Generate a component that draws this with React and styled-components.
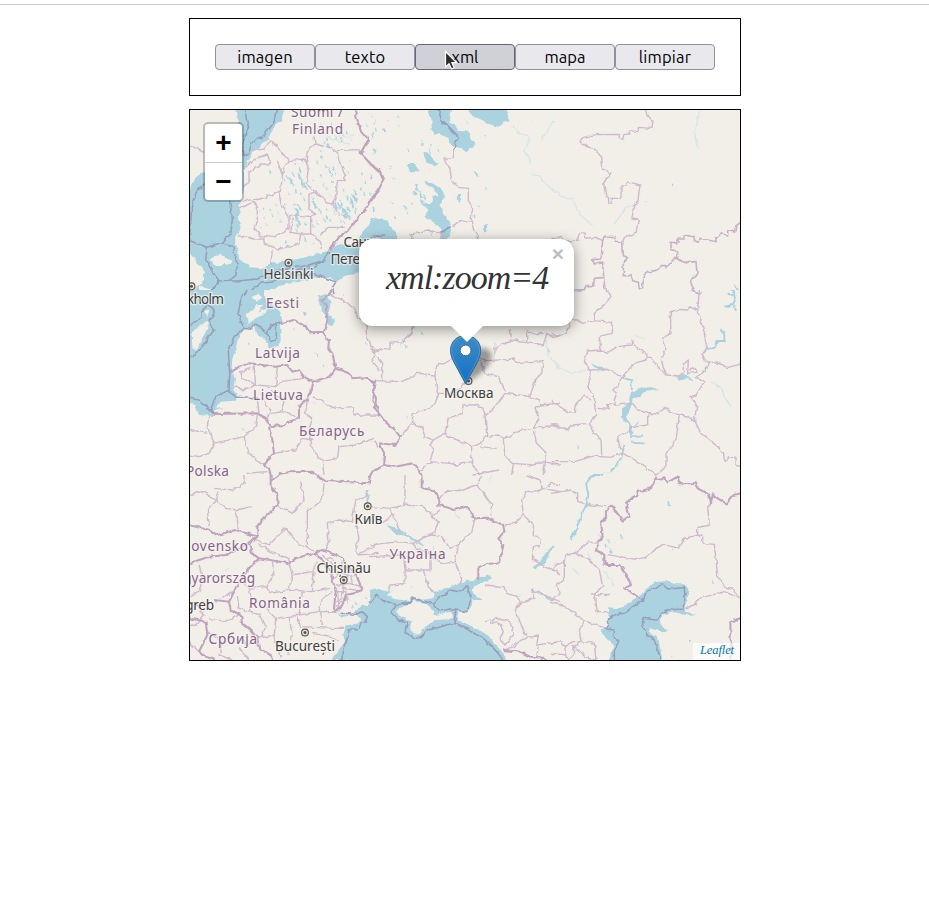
import React from 'react';
import styled, { createGlobalStyle } from 'styled-components';

const GlobalStyle = createGlobalStyle`
  *, *::before, *::after { box-sizing: border-box; }
  body { margin: 0; background: #fff; }
`;

const chancery = `'Z003', 'URW Chancery L', 'Liberation Serif', serif`;

const Page = styled.main`
  display: flex;
  flex-direction: column;
  align-items: center;
  gap: 13px;
  width: 929px;
  height: 904px;
  padding: 0 0 0 1px;
  background: #fff;
  overflow: hidden;
`;

const TopRule = styled.div`
  width: 931px;
  height: 5px;
  margin-left: -1px;
  flex: none;
  border-bottom: 1px solid #c8c8c8;
`;

const Toolbar = styled.nav`
  display: flex;
  flex: none;
  width: 552px;
  padding: 25px;
  border: 1px solid #000;
`;

const ToolButton = styled.button`
  position: relative;
  flex: 1;
  height: 26px;
  padding: 0;
  border: 1px solid ${(p) => (p.$active ? '#676774' : '#8f8f9d')};
  border-radius: 4px;
  background: ${(p) => (p.$active ? '#d0d0d7' : '#e9e9ed')};
  color: #000;
  font: 16.5px/24px Ubuntu, 'Noto Sans', sans-serif;
  letter-spacing: ${(p) => p.$tracking}px;
`;

const Pointer = styled.svg`
  position: absolute;
  left: 28px;
  top: 5px;
  width: 14px;
  height: 21px;
`;

const MapFrame = styled.section`
  position: relative;
  flex: none;
  width: 552px;
  height: 552px;
  border: 1px solid #000;
  overflow: hidden;
  background: #f2efe9;
`;

const MapCanvas = styled.svg`
  display: block;
  width: 550px;
  height: 550px;
`;

const ZoomBar = styled.div`
  position: absolute;
  left: 13px;
  top: 12px;
  width: 41px;
  border: 2px solid rgba(0, 0, 0, 0.22);
  border-radius: 5px;
  background-clip: padding-box;
  background-color: #fff;
`;

const ZoomButton = styled.button`
  display: grid;
  place-items: center;
  width: 37px;
  height: ${(p) => p.$height}px;
  padding: 0;
  border: 0;
  border-bottom: ${(p) => (p.$divided ? '1px solid #ccc' : '0')};
  background: transparent;
  color: #000;
  font: bold 28px/36px 'Liberation Sans', sans-serif;
`;

const Popup = styled.div`
  position: absolute;
  left: 169px;
  top: 129px;
  width: 215px;
  height: 87px;
  padding: 16px 0 0 27px;
  border-radius: 14px;
  background: #fff;
  box-shadow: 0 3px 14px rgba(0, 0, 0, 0.4);
`;

const PopupTip = styled.div`
  position: absolute;
  left: 91px;
  top: 86px;
  width: 34px;
  height: 17px;
  background: #fff;
  clip-path: polygon(0 0, 100% 0, 50% 100%);
`;

const PopupText = styled.p`
  margin: 0;
  color: #333;
  font: italic 34px/46px ${chancery};
  letter-spacing: -1px;
  white-space: nowrap;
`;

const CloseButton = styled.button`
  position: absolute;
  right: 6px;
  top: 5px;
  width: 20px;
  height: 20px;
  padding: 0;
  border: 0;
  background: none;
  color: #bdbdbd;
  font: bold 21px/20px 'Liberation Sans', sans-serif;
`;

const Attribution = styled.a`
  position: absolute;
  right: 0;
  bottom: 0;
  width: 47px;
  height: 17px;
  padding-right: 6px;
  background: rgba(255, 255, 255, 0.7);
  color: #0078a8;
  font: italic 12.5px/15px ${chancery};
  letter-spacing: -0.1px;
  text-align: right;
`;

/* Each map section is digitised at three units per pixel; x/y give its corner. */
const sections = [
  {
    x: 189, y: 109,
    water: [
      'M138,0 L285,0 L277,35 L258,50 L244,72 L240,92 L220,102 L202,125 L192,122 L182,150 L165,180 L165,240 L160,275 L148,288 L152,310 L146,335 L155,352 L150,375 L140,385 L138,408 L148,425 L150,450 L178,465 L185,475 L225,478 L240,465 L300,455 L340,447 L382,436 L420,425 L445,405 L500,410 L510,390 L530,355 L560,328 L600,335 L600,400 L570,440 L510,490 L500,495 L470,500 L440,520 L425,505 L380,505 L330,518 L270,530 L235,558 L0,560 L25,535 L45,515 L45,490 L20,455 L0,430 L0,250 L20,205 L50,185 L100,110 L150,40Z',
    ],
    land: ['M62,452 L78,438 L95,436 L110,448 L130,455 L125,465 L105,462 L95,475 L75,468Z', 'M35,530 L70,540 L55,552 L25,555Z'],
    sea: [
      'M170,0 L178,45 L160,110 L165,140', 'M262,0 L255,40 L225,80 L190,100 L178,135 L165,140',
      'M55,215 L22,250 L8,290 L5,340 L2,395 L55,415 L100,400 L125,375 L130,330 L122,275',
      'M55,415 L50,450 L68,485 L92,518 L150,515 L205,510 L260,485 L300,478 L350,470 L400,455 L420,430',
      'M100,400 L132,415 L145,470 L140,500 L115,518', 'M92,518 L60,555',
      'M175,555 L215,520 L260,515 L300,495 L360,500 L380,495 L440,520 L430,535 L435,555',
      'M300,495 L345,475 L370,480 L385,465 L410,453',
    ],
    nation: ['M497,0 L507,40 L517,70 L540,95 L530,105 L515,133 L545,165 L570,190', 'M570,245 L550,265 L530,300 L510,322 L490,350 L450,385 L420,425'],
    province: [
      'M0,115 L15,110 L45,130', 'M165,180 L190,155 L235,135 L245,165 L215,165 L180,190 L180,220 L165,230',
      'M190,125 L225,120 L245,95 L265,115 L300,155 L285,175 L280,200', 'M300,155 L345,150 L360,175 L355,200 L352,225 L380,250',
      'M375,80 L378,105 L355,125 L352,150 L355,170', 'M378,105 L420,115 L445,130 L450,155 L470,200 L465,215 L445,215 L440,265 L430,285 L410,280 L405,265 L375,250 L360,255',
      'M445,125 L510,122 L520,133', 'M165,275 L215,270 L275,245 L280,200 L265,155', 'M150,300 L190,280 L205,290 L205,330 L195,360 L215,380 L250,385 L300,360 L300,320 L275,280 L270,250',
      'M300,320 L360,325 L380,315 L360,300 L360,255', 'M150,380 L195,390 L225,390 L225,405 L270,420 L330,405 L335,375 L305,370 L310,325',
      'M365,325 L365,370 L395,400 L400,420', 'M395,380 L420,355 L470,355', 'M335,375 L370,375', 'M245,470 L250,420', 'M430,285 L440,300 L475,330',
    ],
    river: ['M395,40 L400,65 L425,90 L480,105', 'M430,55 L470,85 L495,80'],
    lakes: [[245,190,10],[305,215,16],[285,212,8],[335,185,12],[340,215,18],[350,235,12],[322,245,8],[300,255,6],[285,285,8],[325,310,18],[330,340,16],[322,365,10],[318,285,8],[345,270,9],[372,265,8],[380,290,14],[395,310,10],[385,340,10],[415,325,10],[440,290,16],[460,300,18],[470,320,14],[455,335,9],[495,265,18],[490,285,16],[500,300,8],[420,185,12],[430,220,8],[395,200,8],[385,160,9],[400,145,8],[440,195,8],[410,235,9],[465,245,8],[475,265,10],[455,280,12],[520,195,7],[525,255,10],[540,275,8],[500,310,8],[475,190,6],[480,155,6],[420,110,12],[395,125,7],[455,90,12],[475,70,8],[430,45,8],[260,290,6],[245,305,8],[225,325,6],[215,355,5],[235,350,6],[275,335,8],[260,375,4],[295,400,9],[185,385,7],[210,305,5],[350,390,8],[375,400,6],[425,260,8],[415,300,6],[445,360,6],[340,155,8],[320,165,6],[560,60,8],[545,20,9],[535,50,6],[312,195,10],[370,215,7],
      [332,202,14],[345,228,14],[330,295,14],[323,325,16],[326,352,12],[310,225,10],[297,205,10],[450,292,14],[468,308,18],[480,300,10],[488,275,14],[497,250,14],[482,325,12],[465,340,8],[435,310,10],[425,335,8],[405,332,8],[388,300,12],[375,280,10],[372,350,8],[425,195,10],[435,180,8],[410,175,8],[400,225,7],[462,75,12],[440,85,10],[485,90,8],[415,90,9],[405,100,8],[385,55,7],[530,220,8],[515,240,8],[340,375,8],[350,345,8],[250,320,7],[265,310,6],[225,300,6],[550,80,8],[560,35,7],[505,280,9],[450,320,9],[360,285,7],[337,255,8]],
  },
  {
    x: 370, y: 109,
    water: [
      'M175,0 L245,0 L238,20 L242,40 L262,50 L262,65 L300,68 L300,88 L315,100 L313,115 L300,118 L290,130 L270,118 L245,110 L235,90 L210,72 L195,78 L180,60 L190,40 L177,22Z',
      'M297,0 L410,0 L417,38 L405,37 L390,54 L365,48 L330,30 L312,25Z',
      'M163,215 L185,222 L212,237 L222,258 L218,278 L208,288 L220,315 L245,350 L240,382 L225,392 L215,388 L214,362 L200,350 L178,330 L163,325 L175,305 L160,290 L148,265 L165,285 L180,285 L190,260 L205,262 L200,248 L180,235Z',
      'M0,330 L30,333 L45,347 L65,355 L82,375 L80,392 L0,392Z', 'M262,255 L273,255 L273,272 L265,282 L260,272Z', 'M342,348 L352,345 L350,370 L338,370Z', 'M110,165 L135,165 L147,185 L120,187Z', 'M160,132 L180,135 L188,155 L205,165 L195,172 L170,160Z', 'M310,185 L325,193 L322,205Z',
    ],
    sea: ['M205,0 L215,35 L265,85 L255,110 L250,122', 'M0,383 L45,378', 'M245,350 L215,370'],
    nation: ['M0,165 L25,180 L40,213 L25,245 L0,280'],
    province: ['M250,120 L250,145 L222,150 L240,180 L245,215 L265,235 L295,238 L295,275 L308,295 L303,335 L312,365 L322,378 L322,392', 'M303,340 L270,335 L250,350 M215,370 L190,370 L175,363 L155,370 L120,375 L130,390 M215,370 L212,392'],
    river: ['M430,50 L450,75 L475,80 L480,95 L460,130 L478,140 L480,165', 'M485,195 L510,202 L520,218 L570,260', 'M515,90 L550,38'],
    lakes: [[10,70,10],[15,125,13],[10,135,8],[45,65,12],[52,35,6],[85,50,8],[85,25,6],[60,175,8],[70,207,7],[5,205,12],[0,255,8],[65,280,8],[12,300,10],[105,295,10],[110,310,8],[75,325,5],[115,125,10],[155,100,12],[185,110,8],[205,125,8],[178,125,14],[175,145,14],[140,235,16],[150,255,16],[135,250,14],[165,265,14],[175,180,4],[130,285,5],[345,82,6],[482,37,4],[347,238,5],[392,328,4],[325,293,7],[315,320,7],[290,40,7],[182,375,8],[15,45,4]],
  },
  {
    x: 551, y: 109,
    province: [
      'M283,0 L290,18 L303,35 L300,58 L262,55 L262,68 L238,65 L238,75 L218,77 L215,88 L205,86 L205,76 L135,77 L95,86 L87,95 L105,112 L130,120 L152,145 L155,180 L180,192 L158,222 L165,265 L172,268 L174,282 L180,282 L182,268 L210,268 L210,230 L228,232 L230,218 L267,228 L260,280 L248,290 L243,330 L262,333 L255,370 L220,385 L215,400',
      'M0,390 L30,382 L40,395 L80,395 L85,370 L103,373 L103,387 L135,385 L155,395',
    ],
    district: [
      'M215,400 L217,440 L230,445 L217,460 L217,500 L240,500 L245,515 L262,520 L265,540 L275,540 L277,500 L290,490 L320,482 L330,470 L345,470 L345,478 L370,448 L380,450 L380,430 L360,420 L360,400 L380,402 L382,390 L400,390 L403,380 L430,382 L430,395 L445,400 L447,388 L495,398 L495,388 L510,375 L530,378 L530,365 L550,368 L555,350 L570,340',
      'M380,450 L400,460 L435,458 L438,495 L425,510 L420,530 L425,543 L450,555',
      'M70,543 L100,542 L105,530 L128,530 L130,508 L158,505 L155,462 L130,465 L125,452 L150,450 L155,395 L160,382 L190,383 L195,397 L215,400', 'M158,505 L162,540 L180,555',
    ],
    river: ['M0,238 L30,262 L65,270 L85,315 L125,350', 'M190,345 L215,310 L225,295 L240,290', 'M445,5 L432,75 L435,100 L445,120', 'M280,280 L292,280'],
    lakes: [[363,228,7],[292,8,4],[555,535,14],[548,548,8]],
  },
  {
    x: 189, y: 290,
    water: [
      'M0,0 L225,0 L235,35 L275,65 L280,95 L273,100 L275,150 L268,168 L240,172 L230,150 L205,135 L195,110 L165,120 L150,140 L145,170 L130,205 L128,235 L138,265 L133,300 L145,315 L140,332 L90,335 L85,350 L100,353 L75,362 L72,378 L30,375 L20,345 L0,340Z',
      'M385,20 L410,12 L425,35 L418,75 L438,90 L430,108 L418,105 L412,80 L395,55Z', 'M342,65 L353,67 L346,85Z',
    ],
    land: ['M170,70 L195,58 L205,42 L220,50 L208,68 L235,55 L230,70 L200,85 L178,102 L178,85Z', 'M188,20 L208,12 L218,22 L205,35Z', 'M8,130 L30,105 L60,95 L55,115 L38,150 L20,180 L10,175Z', 'M45,60 L62,60 L55,80Z', 'M225,0 L320,0 L300,20 L240,35 L225,20Z'],
    sea: [
      'M75,372 L65,358 L80,320 L120,300 L122,250 L118,180 L135,140 L163,115 L148,70 L155,30 L175,0', 'M0,325 L30,330 L75,372',
      'M235,130 L245,155 L262,150 L262,105', 'M0,200 L20,195 L75,120 L60,90 L75,70 L75,55 L55,45 L38,65 L40,80 L10,100 L0,115',
      'M163,115 L185,118 L200,100 L235,130 L245,105 L275,100', 'M118,302 L140,318 L205,325',
    ],
    nation: [
      'M427,0 L418,20 L400,30 L410,45 L415,90 L405,125', 'M275,100 L315,90 L350,110 L365,130 L405,128 L412,145 L420,150 L418,175 L430,190 L440,235 L420,260 L370,275 L345,260 L330,240 L310,245 L295,225 L260,230 L220,225 L180,220 L150,230 L122,250',
      'M440,235 L480,250 L490,265 L530,262 L555,280 L550,330 L565,350 L570,380', 'M370,275 L365,300 L355,325 L330,350 L330,385 L300,395 L290,405 L245,408 L235,390 L205,370 L75,372', 'M240,410 L250,450 L255,490 L225,525 L240,535 L245,555', 'M270,552 L300,547 L370,545 L385,555', 'M543,558 L550,545 L570,535',
    ],
    province: [
      'M205,325 L210,370', 'M195,225 L200,285 L160,265 L155,245 L185,235', 'M265,230 L260,290 L200,285 L165,300 L135,290', 'M260,290 L275,275 L345,265', 'M215,325 L245,360 L235,385', 'M275,365 L285,335 L245,300', 'M245,370 L290,365 L330,385',
      'M370,320 L395,330 L430,355 L490,350 L495,375 L570,375', 'M420,10 L470,35 L500,60 L505,80 L535,105 L535,140 L555,190 L550,210 L570,240',
      'M60,375 L55,410 L75,460 L60,490 L30,500 L0,495', 'M0,418 L55,430', 'M75,460 L165,440 L200,410 L205,375', 'M165,440 L180,490 L220,525',
      'M255,490 L320,480 L340,445 L370,450', 'M355,325 L350,370 L370,385 L360,420 L365,470 L400,515 L445,505 L450,470 L500,465 L555,445', 'M400,515 L405,555', 'M170,550 L235,545', 'M550,180 L570,180',
    ],
    lakes: [[180,160,6],[315,117,5],[380,193,8],[405,227,5],[378,338,5],[162,418,8],[532,160,6],[462,15,5],[390,372,4]],
  },
  {
    x: 370, y: 290,
    nation: ['M0,275 L15,272 L10,300 L18,325 L15,355 L45,395 L75,420 L90,440 L75,465 L30,460 L45,500 L42,525 L75,530 L130,520 L155,555', 'M15,540 L42,527'],
    province: [
      'M130,108 L125,130 L105,145 L100,155 L60,160 L60,178 L40,175 L15,185 L0,175', 'M10,185 L35,220 L35,270', 'M15,272 L90,275 L105,270 L130,260 L140,250 L195,255 L205,220 L220,222 L250,205',
      'M195,255 L200,300 L205,315 L195,340 L165,360 L130,370 L125,400 L95,435', 'M200,310 L240,310 L265,300 L290,275', 'M125,400 L155,410 L165,440 L190,450 L225,430 L235,385 L275,370 L280,345 L315,345 L335,350 L345,375 L350,435 L330,460 L310,470 L225,435',
      'M345,375 L370,355 L405,310 L470,318 L510,330 L512,345 L495,355 L508,385 L490,415 L430,425 L420,440 L400,445 L385,435 L350,440', 'M330,210 L345,250 L385,260 L400,295 L410,305',
      'M330,205 L355,212 L430,207 L440,218 L520,212 L515,250 L495,270 L490,290 L478,320', 'M375,195 L375,175 L425,150 L470,155 L520,165 L530,130 L550,143 L570,135', 'M425,150 L420,115', 'M470,155 L470,122 L490,132 L520,130',
      'M510,345 L570,340', 'M490,415 L555,405 L570,415', 'M490,420 L500,460 L530,490 L520,555', 'M400,445 L405,500 L430,520 L425,555', 'M305,470 L305,520 L330,555',
      'M190,450 L180,465 L190,480 L180,515 L240,520 L260,525 L305,515', 'M180,515 L150,545', 'M430,520 L490,525 L520,515 L570,525', 'M0,455 L18,455 L25,475', 'M330,470 L380,475',
      'M310,555 L385,540',
    ],
    river: ['M530,140 L535,200', 'M540,200 L570,230'],
    lakes: [[160,130,8],[100,152,12],[105,170,10],[95,165,8],[375,163,8],[345,193,6],[25,235,7],[170,260,5],[185,262,5],[530,155,12],[535,180,12],[110,380,6],[295,295,4]],
  },
  {
    x: 551, y: 290,
    water: ['M120,220 L145,232 L172,238 L155,244 L130,232Z', 'M240,310 L262,295 L300,292 L325,297 L280,303 L270,320 L245,325 L240,350 L225,385 L248,410 L265,390 L258,405 L245,415 L242,435 L270,440 L242,445 L233,425 L235,405 L213,385 L213,355 L230,345Z', 'M380,262 L400,252 L412,258 L430,275 L408,267 L382,272Z'],
    province: [
      'M170,0 L180,20 L155,50 L130,70 L130,92 L185,98 L180,130 L145,140 L150,180', 'M0,130 L20,140 L45,128 L60,90 L80,90 L95,100 L130,92',
      'M150,180 L110,183 L100,215 L115,240 L120,260 L110,290 L130,325 L132,355 L140,375 L115,400 L60,405 L50,422 L20,405 L0,405', 'M150,180 L170,187 L200,170 L240,165 L245,150 L250,168 L285,190 L285,210 L250,220 L210,265 L200,290 L185,300 L197,310 L190,330 L195,345 L170,340 L175,358 L140,355', 'M115,240 L165,238 L190,245 L210,265',
      'M285,205 L300,205 L325,235 L345,255 L385,258 L398,245 L395,225 L412,210 L410,250 L435,247 L432,235 L415,240', 'M345,255 L330,210 L345,180 L332,145 L360,130 L358,65 L385,58 L410,60 L412,50 L440,62 L452,95 L460,130 L468,180 L450,195 L475,220 L460,245 L435,262 L460,275 L435,315 L420,320 L437,350 L430,390 L450,430 L500,470 L518,490 L520,515 L535,500 L555,505 L555,525 L570,530',
      'M440,62 L445,0', 'M475,220 L490,215 L530,232 L570,222', 'M0,333 L50,365 L70,367 L72,348 L100,315 L120,330', 'M195,345 L245,340 L260,360 L290,370 L290,405 L245,412 L230,425 L200,440 L205,465 L215,490 L175,502 L130,498 L70,515 L0,515',
      'M290,370 L320,372 L340,355 L385,375 L410,378 L430,395', 'M385,375 L375,450 L345,490 L345,530 L315,555 L260,515 L215,490', 'M115,400 L130,430 L150,450 L152,495', 'M450,195 L460,215',
    ],
    river: ['M0,200 L25,235 L60,248 L110,240', 'M480,275 L510,290 L520,320 L540,350', 'M250,135 L280,148', 'M155,553 L185,540'],
    channel: ['M210,262 L240,270 L243,300', 'M220,465 L212,500 L195,530 L180,543', 'M548,0 L552,30 L545,45 L520,50 M548,20 L530,10 M550,45 L555,65', 'M508,115 L520,130 L520,153 L497,153 L492,172 L465,178 L458,190', 'M240,458 L280,460 M245,440 L275,440'],
    lakes: [[80,470,6]],
  },
  {
    x: 189, y: 475,
    water: ['M580,345 L562,342 L545,360 L555,368 L540,388 L515,395 L500,408 L503,425 L520,432 L505,445 L470,452 L463,480 L468,500 L445,530 L428,555 L580,560Z', 'M530,45 L538,45 L538,85 L533,85Z', 'M445,410 L455,420 L480,420 L455,428Z'],
    sea: ['M455,415 L500,418 L520,410 L535,425 L530,438 L518,440 L510,460 L480,465 L475,490 L462,520 L455,555'],
    nation: [
      'M245,0 L245,30 L265,60 L265,90 L215,140 L205,155 L205,185 L180,205 L190,235 L210,250 L260,258 L300,265 L320,250 L375,235 L400,225 L430,235 L460,250 L475,275 L500,290 L518,345 L495,355 L470,360 L460,390 L440,410 L435,400 L440,350 L425,290 L395,250 L375,235',
      'M0,150 L60,165 L85,180 L140,165 L205,185', 'M210,250 L180,280 L155,315 L145,330 L120,380 L75,375', 'M0,265 L60,245 L110,240 L150,220 L180,205', 'M120,380 L125,405 L155,420 L160,445 L185,465 L205,490 L210,520 L245,540 L250,555',
      'M245,18 L270,0', 'M385,0 L395,12 L410,18 L480,22 L540,25 L543,0', 'M0,430 L50,440 L55,480 L30,530 L50,545 L80,555', 'M0,265 L0,300',
    ],
    province: [
      'M75,40 L130,45 L165,25 L165,0', 'M0,60 L40,50 L80,75 L90,50', 'M80,75 L110,100 L140,105 L190,95', 'M80,75 L55,105 L60,150', 'M140,105 L145,165', 'M265,90 L310,115 L345,75 L335,20', 'M355,100 L355,210', 'M355,110 L400,75 L405,25', 'M190,190 L240,210 L290,160 L330,210 L375,225', 'M205,205 L245,230 L300,250 L300,265',
      'M415,145 L450,135 L490,140 L500,75 L540,60', 'M415,145 L420,200 L405,230', 'M500,145 L510,190 L500,210 L505,240 L570,205', 'M505,240 L570,235', 'M155,315 L180,340 L230,335 L255,300 L250,260', 'M230,335 L245,355 L300,345 L310,300 L300,265', 'M180,340 L190,380 L180,410 L215,420 L230,455 L215,490', 'M300,345 L370,350 L420,340', 'M310,300 L370,290 L385,260', 'M370,350 L375,290', 'M230,400 L260,430 L330,420 L340,350', 'M330,420 L390,410 L435,410', 'M260,430 L255,490 L275,550', 'M300,425 L310,480 L300,540', 'M390,410 L400,370 L430,350', 'M340,455 L430,460 L465,460', 'M370,475 L430,485 L450,500', 'M140,345 L100,370', 'M325,420 L335,460', 'M205,490 L255,480', 'M395,410 L400,450',
      'M60,430 L110,440 L150,420', 'M100,500 L90,540 L130,555', 'M150,520 L180,555', 'M30,270 L40,310 L30,350 L0,365', 'M0,380 L25,390 L45,420 L20,450 L0,455', 'M55,470 L100,500', 'M0,500 L30,530', 'M180,410 L150,400 L145,365', 'M200,500 L170,510 L160,490',
      'M400,240 L430,270 L470,280 L500,300', 'M435,290 L480,300 L460,340 L500,345', 'M440,350 L470,350 L475,380', 'M430,320 L450,330 L480,325 L515,335', 'M440,270 L445,300 L435,310', 'M455,260 L460,290', 'M410,250 L425,245 L435,260', 'M465,340 L455,375 L440,380', 'M485,300 L490,330', 'M445,335 L450,410 M440,395 L458,380',
    ],
    river: ['M100,290 L120,280'],
    lakes: [[490,395,8],[500,385,8],[530,370,8]],
  },
  {
    x: 370, y: 475,
    water: [
      'M0,345 L20,340 L55,350 L70,345 L50,360 L75,372 L115,378 L130,365 L150,375 L190,370 L195,350 L215,343 L240,335 L285,318 L320,313 L360,300 L370,310 L330,325 L305,340 L310,355 L338,375 L310,375 L308,395 L285,412 L265,410 L260,435 L290,445 L310,460 L330,465 L360,485 L378,510 L400,535 L410,560 L0,560Z',
      'M48,150 L75,157 L110,175 L105,187 L80,177Z', 'M488,277 L510,260 L530,230 L550,212 L535,240 L525,265 L495,283Z',
    ],
    land: ['M82,405 L100,395 L130,375 L175,390 L190,410 L185,422 L245,410 L250,432 L195,435 L165,455 L145,480 L130,478 L120,455 L125,440 L85,420Z'],
    sea: [
      'M0,385 L20,355 L35,375 L85,390 L120,382 L130,368 L160,378 L190,388 L210,408 L240,402 L290,410 L305,370 L290,335 L270,350 L240,345 L225,360 L205,365 L190,388',
      'M120,385 L75,390 L65,415 L85,435 L112,440 L105,470 L130,490 L150,488 L175,465 L250,445 L270,450 L300,468 L340,490 L380,530 L400,555', 'M258,405 L252,445',
    ],
    nation: ['M155,0 L155,40 L190,45 L205,65 L205,90 L235,98 L250,105 L290,95 L315,130 L350,128 L400,150 L403,170 L385,190 L400,210 L388,262 L350,268 L325,280 L325,315', 'M400,525 L450,530 L480,545 L520,548 L530,555'],
    province: [
      'M105,0 L105,90 L60,100 L70,120 L35,145', 'M0,95 L60,100', 'M70,120 L90,170', 'M105,90 L160,95 L205,140 L195,170 L150,195 L130,205', 'M210,105 L185,125 L205,140', 'M160,185 L190,180 L215,185 L240,220 L265,210 L305,170 L315,130',
      'M265,215 L255,260 L275,310 L270,330', 'M180,245 L220,265 L255,262', 'M0,210 L40,205 L90,200 L130,205 L135,220 L180,235 L180,285 L105,285 L100,240 L0,245', 'M105,285 L105,325 L60,330 L55,350', 'M160,285 L175,335 L195,355',
      'M205,75 L225,50 L280,45 L320,30 L345,60 L365,90 L365,135', 'M320,30 L335,0', 'M405,150 L435,145 L460,120 L490,150 L490,185 L515,190 L510,215 L490,215 L487,250 L525,275 L560,290 L570,300', 'M460,120 L455,75 L470,50 L520,45 L510,15 L470,0', 'M520,40 L570,50',
      'M345,330 L400,335 L410,355 L440,365 L455,385 L435,400 L450,440 L470,490 L440,500 L430,515 L400,525', 'M455,380 L495,370 L485,345 L510,355 L570,380', 'M345,440 L380,430 L400,435 L420,440 L430,480 L405,510 L390,490 L400,470 L385,440 L360,445', 'M470,490 L505,480 L500,510 L570,500', 'M505,515 L500,545', 'M570,30 L545,25 L520,40',
    ],
    river: ['M255,110 L270,130', 'M100,178 L130,200 L160,210', 'M190,215 L195,260', 'M355,25 L365,0', 'M440,365 L460,355'],
    channel: ['M105,182 L145,200 L160,215', 'M500,350 L520,360 L545,375'],
    lakes: [[370,440,10],[125,335,6],[55,345,8]],
  },
  {
    x: 551, y: 475,
    water: ['M148,465 L168,450 L175,400 L195,402 L235,385 L255,365 L270,360 L290,335 L315,322 L342,318 L375,328 L400,328 L412,340 L410,375 L400,400 L410,412 L438,418 L405,420 L370,412 L340,418 L325,440 L335,455 L348,468 L325,468 L295,460 L300,480 L320,485 L328,520 L335,560 L172,560 L188,510 L165,490Z'],
    sea: ['M165,462 L175,430 L195,418 L220,415 L245,395 L278,375 L285,350 L335,328 L350,342 L400,338 L402,370 L395,402 L345,405 L315,435 L275,430 L275,450 L290,485 L310,495 L330,555', 'M165,462 L188,465 L185,485 L203,495 L190,530 L190,555'],
    nation: ['M278,375 L220,340 L240,330 L225,295 L205,270 L170,270 L160,265 L160,240 L135,225 L140,205 L155,185 L150,140 L165,130 L165,105 L180,92 L195,110 L215,137 L235,125 L225,80 L255,65 L260,50 L300,40 L315,8 L320,15 L340,10 L350,22 L380,5 L385,25 L435,25 L440,40 L475,60 L480,85 L485,58 L500,70 L525,85 L545,60 L570,55', 'M540,555 L538,440 L570,430'],
    province: [
      'M0,55 L60,45 L80,55 L80,80 L120,90 L165,95', 'M480,85 L470,95 L475,150 L440,158 L440,180 L400,190 L385,220 L335,208 L280,248 L255,253 L165,238', 'M440,180 L455,182 L455,205 L490,208 L500,300 L520,335 L550,345 L565,370', 'M405,400 L430,390 L445,370 L520,350 L555,365',
      'M135,205 L115,200 L70,235 L45,240 L40,260 L15,270 L0,290', 'M70,235 L110,250 L145,285 L155,335 L130,355 L135,410 L175,410', 'M40,260 L40,310 L20,330 L25,360 L0,375', 'M0,378 L50,400 L100,438 L165,460', 'M100,438 L85,465 L90,500 L65,500 L40,515 L30,500 L0,505', 'M90,500 L130,505 L135,555', 'M90,500 L70,515 L65,545 L50,555', 'M40,515 L50,550', 'M120,360 L180,358', 'M65,510 L110,550 L135,555', 'M0,285 L20,290', 'M0,535 L45,540',
    ],
    river: ['M155,285 L180,315 L190,335', 'M65,280 L85,300', 'M110,230 L120,262'],
    channel: ['M155,0 L125,0 L105,25 L112,60 L105,90 L90,125 L75,165 L60,195', 'M0,225 L8,212'],
    lakes: [[354,87,11],[210,185,9],[172,197,10],[165,212,8],[180,228,12],[145,182,7],[150,242,6],[240,138,4],[363,222,6],[385,208,5],[483,323,8],[360,540,6],[420,497,4]],
  },
];

const labels = [
  ['Suomi /', 291, 117, 52, 'country'], ['Finland', 292, 133.5, 51, 'country'], ['Eesti', 266, 307.5, 33, 'country'], ['Latvija', 255, 358, 45, 'country'],
  ['Lietuva', 253, 400, 50, 'country'], ['Беларусь', 299, 436, 65.5, 'country'], ['Polska', 186, 475.5, 43, 'country'], ['Slovensko', 179, 550.5, 69, 'country'],
  ['Magyarország', 163, 583, 92, 'country'], ['România', 249, 608, 61, 'country'], ['Србија', 208.5, 644, 48.5, 'country'], ['Україна', 389.5, 559, 56, 'country'],
  ['Helsinki', 263.5, 279, 50, 'city'], ['Санкт-', 343.5, 247, 39, 'city'], ['Петербург', 330.5, 263.5, 64, 'city'], ['Stockholm', 163, 303.5, 61, 'city'], ['Москва', 444, 398, 49.5, 'city'],
  ['Київ', 354.5, 523.5, 28, 'city'], ['Zagreb', 170.5, 610, 43.5, 'city'], ['Chișinău', 316.5, 572.5, 54.5, 'city'], ['București', 275, 651, 60, 'city'],
];

const capitals = [[288.5, 262.7], [191.5, 286.3], [468.5, 381], [367.7, 506.3], [343.7, 580], [305, 632.5]];

const inks = { country: '#866289', city: '#404040' };

const MapLabel = styled.text`
  font: 13.6px 'Noto Sans', sans-serif;
  fill: ${(p) => inks[p.$kind]};
  stroke: rgba(247, 245, 241, 0.72);
  stroke-width: 2.6px;
  stroke-linejoin: round;
  paint-order: stroke;
`;

/* Small lakes: slim slanted slivers, leaning a little differently each time. */
const lakePath = ([x, y, s], i) => {
  const lean = (i % 3) - 1;
  return `M${x - s * 0.45},${y - s * 0.75} l${s * 0.5},${s * 0.35} l${s * 0.4 + lean * 2},${s * 0.95} l${-s * 0.5},${s * 0.1} l${-s * 0.15},${-s * 0.75}Z`;
};

function Section({ part }) {
  const { x, y, water = [], land = [], sea = [], nation = [], province = [], district = [], river = [], channel = [], lakes = [] } = part;
  return (
    <g transform={`translate(${x} ${y}) scale(0.33333)`} strokeLinejoin="round">
      <path d={water.join(' ')} fill="#aad3df" />
      <path d={land.join(' ')} fill="#f2efe9" />
      <path d={lakes.map(lakePath).join(' ')} fill="#aad3df" />
      <g fill="none">
        <path d={river.join(' ')} stroke="#d3e5e7" strokeWidth="3.4" />
        <path d={channel.join(' ')} stroke="#a6d2df" strokeWidth="5.5" />
        <path d={province.join(' ')} stroke="#cfbacd" strokeWidth="4.2" />
        <path d={district.join(' ')} stroke="#c8b1c7" strokeWidth="4.8" />
        <path d={nation.join(' ')} stroke="#bfa4be" strokeWidth="6.2" />
        <path d={sea.join(' ')} stroke="#979dbb" strokeWidth="4.6" />
      </g>
    </g>
  );
}

function RegionMap() {
  return (
    <MapCanvas viewBox="190 110 550 550" role="img" aria-label="Europa oriental">
      <defs>
        <filter id="coast" x="186" y="106" width="558" height="558" filterUnits="userSpaceOnUse" colorInterpolationFilters="sRGB">
          <feTurbulence type="fractalNoise" baseFrequency="0.2" numOctaves="1" seed="4" result="noise" />
          <feDisplacementMap in="SourceGraphic" in2="noise" scale="4.5" xChannelSelector="R" yChannelSelector="G" />
          <feGaussianBlur stdDeviation="0.38" />
        </filter>
        <linearGradient id="pin" x1="0" y1="0" x2="0" y2="1">
          <stop offset="0" stopColor="#3f8dc6" />
          <stop offset="1" stopColor="#126fc6" />
        </linearGradient>
        <filter id="soft" x="-50%" y="-50%" width="200%" height="200%"><feGaussianBlur stdDeviation="2.6" /></filter>
      </defs>
      <g filter="url(#coast)">
        <rect x="180" y="100" width="570" height="570" fill="#f2efe9" />
        {sections.map((part) => <Section key={`${part.x}-${part.y}`} part={part} />)}
      </g>
      {capitals.map(([x, y]) => (
        <g key={x} fill="#e9e6dc" stroke="#57544b">
          <circle cx={x} cy={y} r="3.4" strokeWidth="1.1" />
          <circle cx={x} cy={y} r="1.5" fill="#57544b" stroke="none" />
        </g>
      ))}
      {labels.map(([name, x, y, width, kind]) => (
        <MapLabel key={name} x={x} y={y} textLength={width} $kind={kind}>{name}</MapLabel>
      ))}
      <path d="M467 383 L474 354 Q482 344 490 351 Q496 360 481 373Z" fill="#000" opacity=".36" filter="url(#soft)" />
      <path d="M465.5 335.5 C456.8 335.5 450.5 342 450.5 350.3 C450.5 354 451.5 357 453.3 361 L465.7 384 L478 361 C479.7 357 480.7 354 480.7 350.3 C480.7 342 474.3 335.5 465.5 335.5Z" fill="url(#pin)" stroke="#2e6c97" />
      <path d="M465.5 336.7 C457.5 336.7 451.7 342.7 451.7 350.3 C451.7 354 452.8 357 454.5 360.5 L465.7 381.5 L476.8 360.5 C478.5 357 479.5 354 479.5 350.3 C479.5 342.7 473.7 336.7 465.5 336.7Z" fill="none" stroke="#fff" opacity=".16" />
      <circle cx="465.6" cy="350.4" r="5.4" fill="#fff" stroke="#2e6c97" />
    </MapCanvas>
  );
}

const tools = [['imagen', 0.1], ['texto', 0.1], ['xml', 0], ['mapa', 0], ['limpiar', 0.2]];

export default function App() {
  return (
    <Page>
      <GlobalStyle />
      <TopRule />
      <Toolbar>
        {tools.map(([name, tracking]) => (
          <ToolButton key={name} $active={name === 'xml'} $tracking={tracking}>
            {name}
            {name === 'xml' && (
              <Pointer viewBox="0 0 14 21">
                <path d="M1.5 1.5 V17 L5 13.8 L7.6 19 L10.2 17.8 L7.8 12.7 H12.5Z" fill="#2d2d2d" stroke="#fff" strokeWidth="1.2" />
              </Pointer>
            )}
          </ToolButton>
        ))}
      </Toolbar>
      <MapFrame>
        <RegionMap />
        <ZoomBar>
          <ZoomButton $height={39} $divided>+</ZoomButton>
          <ZoomButton $height={37}>−</ZoomButton>
        </ZoomBar>
        <Popup>
          <PopupText>xml:zoom=4</PopupText>
          <CloseButton>×</CloseButton>
          <PopupTip />
        </Popup>
        <Attribution>Leaflet</Attribution>
      </MapFrame>
    </Page>
  );
}
